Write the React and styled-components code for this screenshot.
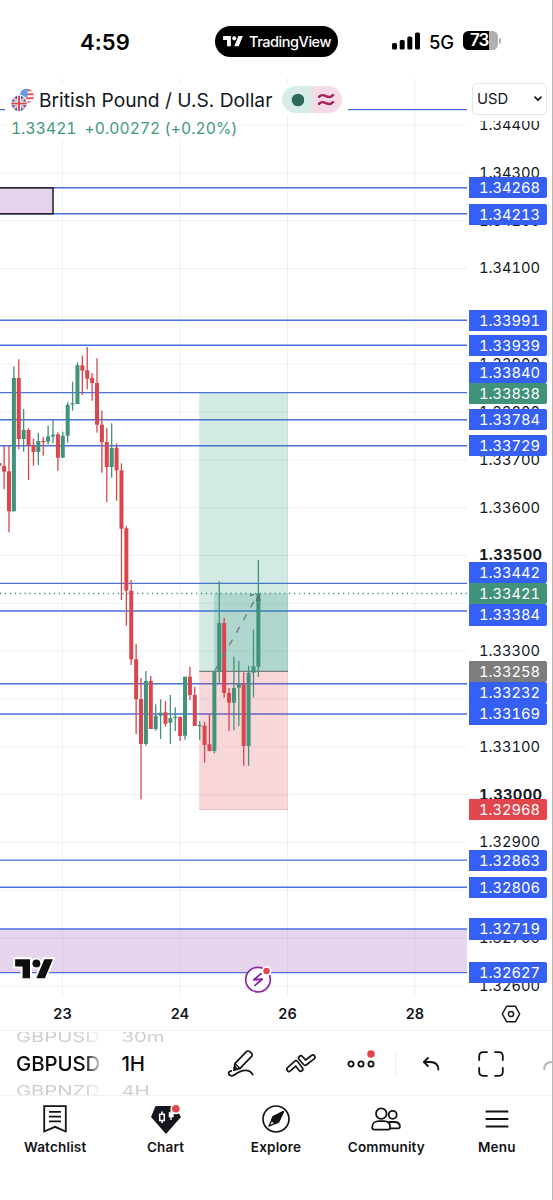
import React from 'react';
import styled, { createGlobalStyle } from 'styled-components';

const GlobalStyle = createGlobalStyle`
  * {
    box-sizing: border-box;
  }
  body {
    margin: 0;
    background: #fff;
    color: #131722;
    font-family: Inter, "Liberation Sans", sans-serif;
  }
  svg {
    display: block;
  }
`

const Screen = styled.div`
  display: flex;
  flex-direction: column;
  width: 553px;
  height: 1200px;
  border-right: 1px solid #b8b8ba;
  background: #fff;
  overflow: hidden;
`

/* ---------- status bar ---------- */

const StatusBar = styled.header`
  display: grid;
  grid-template-columns: 215px 123px 1fr;
  align-items: center;
  height: 78px;
  padding-top: 5px;
  flex: none;
`
const Clock = styled.div`
  padding-left: 80px;
  font-size: 22px;
  font-weight: 600;
  letter-spacing: 0.1px;
  color: #000;
`
const Island = styled.div`
  display: flex;
  align-items: center;
  justify-content: center;
  gap: 5px;
  height: 31px;
  border-radius: 16px;
  background: #000;
  color: #fff;
  font-size: 14.5px;
  font-weight: 500;
  letter-spacing: -0.45px;
`
const StatusRight = styled.div`
  display: flex;
  align-items: center;
  padding-left: 54px;
  color: #000;
`
const Signal = styled.svg`
  margin-bottom: 2px;
`
const Network = styled.span`
  width: 34px;
  margin-left: 9px;
  font-size: 18.5px;
  font-weight: 500;
  letter-spacing: -0.3px;
`
const Battery = styled.div`
  width: 35px;
  height: 19px;
  margin-bottom: 2px;
  padding-left: 7px;
  border-radius: 5.5px;
  background: linear-gradient(90deg, #000 26px, #b0b0b0 26px);
  color: #fff;
  font-size: 17px;
  font-weight: 600;
  line-height: 19px;
  letter-spacing: -0.9px;
`
const BatteryTip = styled.div`
  width: 2px;
  height: 6px;
  margin: 0 0 2px 1px;
  border-radius: 0 2px 2px 0;
  background: #b0b0b0;
`

/* ---------- chart ---------- */

const ChartArea = styled.main`
  display: grid;
  grid-template-columns: 468px 1fr;
  height: 917px;
  flex: none;
`
const Plot = styled.section`
  position: relative;
`
const Legend = styled.div`
  position: absolute;
  top: 6px;
  left: 5px;
`
const LegendTitle = styled.div`
  display: flex;
  align-items: center;
  width: 343px;
  height: 31px;
  padding-left: 6px;
  background: rgba(255, 255, 255, 0.97);
`
const SymbolName = styled.h1`
  width: 243px;
  margin: 0 0 0 4px;
  font-size: 19.2px;
  font-weight: 400;
  letter-spacing: 0;
  white-space: nowrap;
`
const StatusChip = styled.div`
  display: flex;
  width: 60px;
  height: 27px;
  border-radius: 14px;
  overflow: hidden;
`
const ChipHalf = styled.div`
  display: flex;
  align-items: center;
  justify-content: center;
  flex: 1;
  background: ${({ $bg }) => $bg};
`
const LegendPrice = styled.div`
  display: inline-flex;
  gap: 8px;
  height: 26px;
  padding: 1px 4px 0 6px;
  align-items: center;
  background: rgba(255, 255, 255, 0.85);
  color: #3f977d;
  font-size: 15.6px;
  letter-spacing: 0.1px;
  font-variant-numeric: tabular-nums;
  white-space: nowrap;
`

const PriceAxis = styled.aside`
  display: flex;
  flex-direction: column;
  height: 917px;
`
const AxisHead = styled.div`
  height: 43px;
  padding: 5px 0 0 4px;
  flex: none;
`
const CurrencySelect = styled.button`
  display: flex;
  align-items: center;
  justify-content: space-between;
  width: 75px;
  height: 32px;
  padding: 0 4px 0 4px;
  border: 1.5px solid #e4e5e9;
  border-radius: 5px;
  background: #fff;
  color: #131722;
  font-family: inherit;
  font-size: 14.8px;
`
const Scale = styled.div`
  position: relative;
  flex: 1;
  overflow: hidden;
`
const Ticks = styled.div`
  display: flex;
  flex-direction: column;
  margin-top: -19.1px;
`
const Tick = styled.div`
  height: 47.83px;
  padding-left: 11px;
  font-size: 14.7px;
  font-weight: ${({ $major }) => ($major ? 700 : 400)};
  letter-spacing: ${({ $major }) => ($major ? '0.35px' : '0')};
  font-variant-numeric: tabular-nums;
  line-height: 47.83px;
`
const PriceTag = styled.div`
  position: absolute;
  left: 0.5px;
  width: 78px;
  height: 21.3px;
  padding-left: 10.5px;
  border-radius: 0 2px 2px 0;
  background: ${({ $color }) => $color};
  color: #fff;
  font-size: 14.7px;
  font-variant-numeric: tabular-nums;
  line-height: 22.3px;
`

const TimeAxis = styled.div`
  display: grid;
  grid-template-columns: 125px 110px 105px 150px 42px;
  align-items: center;
  justify-items: center;
  height: 35px;
  padding-top: 2px;
  font-size: 14.5px;
  font-weight: 600;
  flex: none;
`

/* ---------- toolbar ---------- */

const Toolbar = styled.div`
  display: flex;
  align-items: center;
  height: 66px;
  padding: 1.5px 0 0 16px;
  border-top: 1.5px solid #f1f1f2;
  border-bottom: 1.5px solid #f1f1f2;
  overflow: hidden;
  flex: none;
`
const Wheel = styled.div`
  display: flex;
  flex-direction: column;
  justify-content: center;
  width: ${({ $width }) => $width}px;
  height: 63px;
  margin-right: ${({ $gap }) => $gap}px;
  overflow: hidden;
  flex: none;
  mask-image: ${({ $fade }) => ($fade ? 'linear-gradient(90deg, #000 68px, transparent 88px)' : 'none')};
`
const WheelItem = styled.div`
  height: 27px;
  line-height: 27px;
  font-size: 20.4px;
  font-weight: ${({ $active }) => ($active ? 500 : 400)};
  letter-spacing: -0.1px;
  color: ${({ $active }) => ($active ? '#0c0c0e' : '#cfcfd0')};
  transform: ${({ $active }) => ($active ? 'none' : 'scaleY(0.72)')};
  white-space: nowrap;
  flex: none;
`
const ToolButton = styled.button`
  display: flex;
  align-items: center;
  justify-content: center;
  width: 60px;
  height: 60px;
  padding: 0;
  border: 0;
  background: none;
  color: #131316;
  flex: none;
`
const Divider = styled.div`
  width: 1px;
  height: 24px;
  margin: 0 5px 0 4px;
  background: #f0f0f1;
  flex: none;
`

/* ---------- tabs ---------- */

const TabBar = styled.nav`
  display: grid;
  grid-template-columns: repeat(5, 1fr);
  height: 104px;
`
const Tab = styled.a`
  display: flex;
  flex-direction: column;
  align-items: center;
  padding-top: 8px;
  font-size: 13.5px;
  font-weight: 600;
  letter-spacing: 0.18px;
  line-height: 18px;
  color: #131316;
`
const TabIcon = styled.div`
  display: flex;
  align-items: center;
  justify-content: center;
  height: 30px;
  margin-bottom: 4px;
`

const BLUE = '#365ff6';
const GREEN = '#40927a';
const RED = '#e0464c';

const TOP = 78;
const yOf = (price) => 125 + (1.344 - price) * 47833;

const ticks = Array.from({ length: 19 }, (_, i) => (1.344 - i * 0.001).toFixed(5));

// label, centre of the tag on the axis, colour
const tags = [
    ['1.34268', 187.8, BLUE],
    ['1.34213', 214.2, BLUE],
    ['1.33991', 320.3, BLUE],
    ['1.33939', 345.4, BLUE],
    ['1.33840', 372.3, BLUE],
    ['1.33838', 393.6, GREEN],
    ['1.33784', 419.8, BLUE],
    ['1.33729', 445.7, BLUE],
    ['1.33442', 572.3, BLUE],
    ['1.33421', 593.6, GREEN],
    ['1.33384', 614.9, BLUE],
    ['1.33258', 671.5, '#7d7d7d'],
    ['1.33232', 692.7, BLUE],
    ['1.33169', 714, BLUE],
    ['1.32968', 809.8, RED],
    ['1.32863', 860.3, BLUE],
    ['1.32806', 887.3, BLUE],
    ['1.32719', 929, BLUE],
    ['1.32627', 972.8, BLUE],
];

const levels = [109.6, 187.7, 213.8, 320.3, 345.3, 392.6, 419.7, 445.8, 583.4, 611, 683.7, 714, 860.1, 887.2, 929, 972.6];
const gridX = [62.5, 180, 287.5, 415];

// [up, high, low, body top, body bottom]
const candles = [
    [0, 463, 466, 463, 466],
    [0, 446, 489.3, 466, 471.7],
    [0, 446, 532.3, 471.3, 511.3],
    [1, 366.3, 511.3, 378, 511.3],
    [0, 359.3, 449.3, 378, 439],
    [1, 409, 451.7, 430, 439],
    [0, 428.3, 480, 430, 445.7],
    [0, 438.7, 465.7, 445.7, 452],
    [1, 432.7, 465, 441, 452],
    [0, 437, 455.7, 441, 442.2],
    [1, 425.7, 444.3, 436.3, 441.7],
    [1, 419.3, 443.3, 434.7, 436.5],
    [0, 432.3, 470.7, 434.3, 457.7],
    [1, 431.7, 457.7, 435.7, 457.7],
    [1, 402.3, 442.7, 404.7, 435.7],
    [1, 381.7, 410.7, 403.2, 404.5],
    [1, 362.3, 404.3, 365.3, 404],
    [0, 355.7, 395, 365.3, 370.7],
    [0, 347, 389.3, 370.3, 378.7],
    [0, 373, 400.7, 378, 383],
    [0, 358.3, 432.7, 383, 424.7],
    [0, 410.7, 472.7, 424.7, 442],
    [0, 427.7, 502.3, 442, 467],
    [1, 423.3, 477.7, 448, 467],
    [0, 443.3, 500.7, 447.7, 470.3],
    [0, 463.3, 600, 470.3, 528.7],
    [0, 526.3, 625.7, 528.3, 590.7],
    [0, 580, 665, 590.7, 659.3],
    [0, 644, 734, 659.3, 699.3],
    [0, 678, 799.3, 699, 744],
    [1, 671, 745.7, 681, 744],
    [0, 676, 729, 681, 729],
    [1, 704.3, 730.7, 715.7, 729],
    [1, 699.3, 739, 712.8, 715.7],
    [0, 701, 726.7, 712.3, 723.7],
    [1, 695, 744, 718, 722.7],
    [1, 707.3, 731, 716.9, 718.1],
    [0, 716.3, 741, 717, 736],
    [1, 676.7, 739.7, 676.7, 735.7],
    [0, 666.7, 700.3, 676.7, 695],
    [0, 686.7, 726, 695, 726],
    [1, 721, 740, 724.9, 726.2],
    [0, 722, 762.7, 725.7, 745],
    [0, 714.3, 751.3, 744.3, 751],
    [1, 671, 753.3, 671, 751],
    [1, 581.3, 683.3, 623, 671],
    [0, 617.7, 697.7, 623, 693],
    [0, 688, 731, 693, 702.7],
    [1, 656.7, 730.3, 688, 702.7],
    [1, 660.7, 726, 684, 687.7],
    [0, 672.3, 765.7, 684, 746],
    [1, 665.7, 765.7, 672.7, 746],
    [1, 629.3, 697.7, 666.3, 672.7],
    [1, 560, 677, 593.3, 666.7],
];

const Candle = ({ x, data }) => {
    const [up, high, low, top, bottom] = data;
    return (
        <g fill={up ? GREEN : '#d9464e'}>
            <rect x={x - 0.65} y={high} width="1.3" height={low - high} />
            <rect x={x - 2} y={top} width="4" height={bottom - top} />
        </g>
    );
};

const TvMark = ({ width, outline }) => (
    <svg width={width} height={width * 22 / 39.5} viewBox="-2 2 39.5 22" fill="currentColor">
        {outline && (
            <g stroke="#fff" strokeWidth="3.6" strokeLinejoin="miter">
                <path d="M14 22H7V11H0V4h14v18zM28 22h-8l7.5-18h8L28 22z" />
                <circle cx="20" cy="8" r="3.6" />
            </g>
        )}
        <path d="M14 22H7V11H0V4h14v18zM28 22h-8l7.5-18h8L28 22z" />
        <circle cx="20" cy="8" r="3.7" />
    </svg>
);

const Watermark = styled.div`
  position: absolute;
  left: 13px;
  top: 879px;
  color: #0f0f0f;
`
const EventBadge = styled.div`
  position: absolute;
  left: 244px;
  top: 887px;
`

const PlotDrawing = () => (
    <svg width="468" height="917" viewBox={`0 ${TOP} 468 917`}>
        <g stroke="#131722" strokeOpacity="0.065">
            {ticks.map((t) => <line key={t} x1="0" x2="467" y1={yOf(t)} y2={yOf(t)} />)}
            {gridX.map((x) => <line key={x} x1={x} x2={x} y1={TOP} y2="995" />)}
        </g>
        <rect x="0" y="929" width="467" height="43.6" fill="#9b4bb5" fillOpacity="0.24" />
        <g stroke="#4a6fe0" strokeWidth="1.4">
            {levels.map((y) => <line key={y} x1="0" x2="467" y1={y} y2={y} />)}
        </g>
        <rect x="-3" y="187.9" width="56" height="25.9" fill="#e6d3eb" stroke="#201a26" strokeWidth="1.5" />

        <rect x="199.2" y="393" width="88.8" height="278.3" fill="#2e9780" fillOpacity="0.21" />
        <rect x="214" y="593.5" width="74" height="77.8" fill="#2e9780" fillOpacity="0.21" />
        <rect x="199.2" y="671.3" width="88.8" height="138.2" fill="#dc4450" fillOpacity="0.21" />
        <path d="M199.2 809.5H288" stroke="#dc9aa4" strokeWidth="0.6" />
        <path d="M199.2 671.3H288" stroke="#76817f" strokeWidth="1.2" />
        <path d="M0 593.5H467" stroke={GREEN} strokeWidth="1.3" strokeDasharray="1.3 3.6" />
        {candles.map((c, i) => <Candle key={i} x={4.1 + 4.89 * (i - 1)} data={c} />)}
        <path d="M215 670.5L256.5 597" stroke="#73837f" strokeWidth="1.5" strokeDasharray="6.5 8" />
        <path d="M250 595.5l4-1.200M256.200 601l2-5 2 5" stroke="#5d716c" strokeWidth="1.4" fill="none" />
    </svg>
);

const Flags = () => (
    <svg width="24" height="24" viewBox="0 0 24 24">
        <defs>
            <clipPath id="us"><circle cx="15.8" cy="8" r="7.2" /></clipPath>
            <clipPath id="uk"><circle cx="8" cy="15.4" r="7.6" /></clipPath>
        </defs>
        <g clipPath="url(#us)">
            <path fill="#fff" d="M8 0h16v16H8z" />
            <path stroke="#e4525a" strokeWidth="2" d="M8 2.2h16M8 6.2h16M8 10.2h16M8 14.2h16" />
            <path fill="#4a90e2" d="M8 0h8.5v9H8z" />
            <path stroke="#d9e8fa" strokeWidth="0.9" strokeDasharray="1 1.6" d="M10 3h6M10 5.5h6M10 8h6" />
        </g>
        <circle cx="8" cy="15.4" r="8.8" fill="#fff" />
        <g clipPath="url(#uk)">
            <path fill="#2f55a8" d="M0 7h16v17H0z" />
            <path stroke="#fff" strokeWidth="2.4" d="M0 7.4l16 16M16 7.4l-16 16" />
            <path stroke="#df4a55" strokeWidth="1" d="M0 7.4l16 16M16 7.4l-16 16" />
            <path stroke="#fff" strokeWidth="3.800" d="M8 7v17M0 15.4h16" />
            <path stroke="#df4a55" strokeWidth="2" d="M8 7v17M0 15.4h16" />
        </g>
    </svg>
);

const EventIcon = () => (
    <svg width="28" height="28" viewBox="0 0 28 28">
        <circle cx="14" cy="14.6" r="12.3" fill="#fff" stroke="#8b2aa6" strokeWidth="1.7" />
        <path d="M17 8.800L9.800 14.800l8.400-.6-7.200 6.200" fill="none" stroke="#8b2aa6" strokeWidth="1.9" strokeLinejoin="round" strokeLinecap="round" />
        <circle cx="22.6" cy="6" r="4.9" fill="#fff" />
        <circle cx="22.6" cy="6" r="3.2" fill={RED} />
    </svg>
);

const line = { fill: 'none', stroke: 'currentColor', strokeLinecap: 'round', strokeLinejoin: 'round' };

const DrawIcon = () => (
    <svg width="28" height="30" viewBox="0 0 28 30" {...line} strokeWidth="1.7">
        <path d="M7 21.2l.9-6.6L19.4 2.7a2.4 2.4 0 0 1 3.4 0l1.6 1.5a2.4 2.4 0 0 1 0 3.4L13 19.4z" />
        <path d="M7.9 14.6l5.1 4.8" strokeWidth="1.4" />
        <path d="M7.2 21l2.6-1.500-2-2z" fill="currentColor" />
        <path d="M4.3 21.9c-1.8.3-2.9 1.5-2.6 2.9.4 2 3.3 2.6 5.5 1.2 3.4-2.2 6.6-4.7 11-4.6 3.5.1 6.3 1.6 7.500 4.3" />
    </svg>
);

const IndicatorIcon = () => (
    <svg width="32" height="24" viewBox="0 0 32 24" {...line}>
        <path d="M4 17.200l7-6.200 4.600 6" strokeWidth="6" />
        <path d="M4 17.200l7-6.200 4.600 6" strokeWidth="2.7" stroke="#fff" />
        <path d="M15.800 6l4.400 5L27.800 5.200" strokeWidth="6" />
        <path d="M15.800 6l4.400 5L27.800 5.200" strokeWidth="2.7" stroke="#fff" />
    </svg>
);

const MoreIcon = () => (
    <svg width="30" height="30" viewBox="0 0 30 30" {...line} strokeWidth="1.8">
        <circle cx="5" cy="15" r="2.6" />
        <circle cx="15" cy="15" r="2.6" />
        <circle cx="25" cy="15" r="2.6" />
        <circle cx="25" cy="5" r="3.8" fill={RED} stroke="none" />
    </svg>
);

const UndoIcon = () => (
    <svg width="18" height="16" viewBox="0 0 18 16" {...line} strokeWidth="1.8">
        <path d="M6 2L1.8 6l4.2 4M2 6h6c5 0 8.3 2.4 8.3 7.5" />
    </svg>
);

const RedoIcon = () => (
    <svg width="18" height="16" viewBox="0 0 18 16" {...line} strokeWidth="1.8" stroke="#b4b4b6">
        <path d="M12 2l4.2 4-4.2 4M16 6h-5.5c-5 0-8.3 2.4-8.3 7.5" />
    </svg>
);

const FullscreenIcon = () => (
    <svg width="28" height="28" viewBox="0 0 28 28" {...line} strokeWidth="1.8">
        <path d="M10 2.2H6A4 4 0 0 0 2.2 6v4M18 2.2h4A4 4 0 0 1 25.8 6v4M10 25.8H6A4 4 0 0 1 2.2 22v-4M18 25.8h4a4 4 0 0 0 3.8-3.8v-4" />
    </svg>
);

const SettingsIcon = () => (
    <svg width="20" height="18" viewBox="0 0 20 18" {...line} strokeWidth="1.5">
        <path d="M5.7 1.2h8.6L18.7 9l-4.4 7.8H5.7L1.3 9z" />
        <circle cx="10" cy="9" r="2.6" />
    </svg>
);

const WatchlistIcon = () => (
    <svg width="24" height="28" viewBox="0 0 24 28" fill="none" stroke="currentColor" strokeWidth="1.8">
        <path d="M1.2 1.2h21.6v25.3L12 21.8 1.2 26.5zM6 6.8h12M6 11.6h12M6 16.4h12" />
    </svg>
);

const ChartIcon = () => (
    <svg width="30" height="29" viewBox="0 0 30 29">
        <path d="M4.6 1h19l6.4 11L15 29 0 12z" fill="#15161f" />
        <path d="M11 6.500v11.500" stroke="#fff" strokeWidth="1.6" />
        <rect x="8.7" y="9.3" width="4.6" height="6.2" fill="#15161f" stroke="#fff" strokeWidth="1.5" />
        <path d="M20 6v9M18.4 8h3.600v3.500h-3.600z" stroke="#fff" strokeWidth="1.4" fill="#fff" />
        <circle cx="24.8" cy="3.8" r="5.5" fill="#fff" />
        <circle cx="24.8" cy="3.8" r="3.8" fill={RED} />
    </svg>
);

const ExploreIcon = () => (
    <svg width="28" height="28" viewBox="0 0 28 28" {...line} strokeWidth="1.7">
        <circle cx="14" cy="14" r="13" />
        <path d="M21.3 6.7L11.3 11.7 6.9 21.2l9.6-4.4z" strokeWidth="1.4" />
        <path d="M21.3 6.7L11.3 11.7l-1.6 3.6 3.7 3.2 3.1-1.7z" fill="currentColor" />
    </svg>
);

const CommunityIcon = () => (
    <svg width="30" height="24" viewBox="0 0 30 24" {...line} strokeWidth="1.8">
        <circle cx="10.3" cy="6.6" r="5.3" />
        <circle cx="21.7" cy="7.8" r="4" />
        <path d="M1.2 20.2c0-4.2 3.2-6 6.6-6h4.800c3.5 0 6.6 1.8 6.6 6 0 1.6-.9 2.4-2.3 2.4H3.5c-1.4 0-2.3-.8-2.3-2.4z" />
        <path d="M18 15h5.2c3.4 0 5.7 1.6 5.7 4.600 0 1.2-.7 1.8-1.9 1.8h-7.6" />
    </svg>
);

const MenuIcon = () => (
    <svg width="24" height="18" viewBox="0 0 24 18" stroke="currentColor" strokeWidth="1.8">
        <path d="M.7 1.5h22.6M.7 9h22.6M.7 16.5h22.6" />
    </svg>
);

const tabs = [
    ['Watchlist', WatchlistIcon],
    ['Chart', ChartIcon],
    ['Explore', ExploreIcon],
    ['Community', CommunityIcon],
    ['Menu', MenuIcon],
];

const Picker = ({ items, ...rest }) => (
    <Wheel {...rest}>
        {items.map((item, i) => <WheelItem key={i} $active={i === 1}>{item}</WheelItem>)}
    </Wheel>
);

const App = () => {
    return (
        <>
            <GlobalStyle />
            <Screen>
                <StatusBar>
                    <Clock>4:59</Clock>
                    <Island>
                        <TvMark width={22} />
                        TradingView
                    </Island>
                    <StatusRight>
                        <Signal width="28" height="18" viewBox="0 0 28 18">
                            <rect x="0" y="11" width="5" height="6.5" rx="1.5" />
                            <rect x="7.7" y="8" width="5" height="9.5" rx="1.5" />
                            <rect x="15.3" y="4.5" width="5" height="13" rx="1.5" />
                            <rect x="23" y="0.5" width="5" height="17" rx="1.5" />
                        </Signal>
                        <Network>5G</Network>
                        <Battery>73</Battery>
                        <BatteryTip />
                    </StatusRight>
                </StatusBar>

                <ChartArea>
                    <Plot>
                        <PlotDrawing />
                        <Legend>
                            <LegendTitle>
                                <Flags />
                                <SymbolName>British Pound / U.S. Dollar</SymbolName>
                                <StatusChip>
                                    <ChipHalf $bg="#d8ece8">
                                        <svg width="14" height="14"><circle cx="8" cy="7" r="6.3" fill="#2c6a5b" /></svg>
                                    </ChipHalf>
                                    <ChipHalf $bg="#f6dbe6">
                                        <svg width="18" height="16" viewBox="1 0 18 16" fill="none" stroke="#a8225a" strokeWidth="2.3">
                                            <path d="M1.500 6c1-3 4-3.5 7.3-1.9C12 5.6 15 5 16.5 2.2M1.500 13c1-3 4-3.5 7.3-1.9C12 12.6 15 12 16.5 9.2" />
                                        </svg>
                                    </ChipHalf>
                                </StatusChip>
                            </LegendTitle>
                            <LegendPrice>
                                <span>1.33421</span>
                                <span>+0.00272 (+0.20%)</span>
                            </LegendPrice>
                        </Legend>
                        <Watermark><TvMark width={42} outline /></Watermark>
                        <EventBadge><EventIcon /></EventBadge>
                    </Plot>
                    <PriceAxis>
                        <AxisHead>
                            <CurrencySelect>
                                USD
                                <svg width="8" height="6" viewBox="0 0 8 6" {...line} strokeWidth="1.7">
                                    <path d="M1 1.2l3 3 3-3" />
                                </svg>
                            </CurrencySelect>
                        </AxisHead>
                        <Scale>
                            <Ticks>
                                {ticks.map((t) => <Tick key={t} $major={t.endsWith('3500') || t.endsWith('3000')}>{t}</Tick>)}
                            </Ticks>
                            {tags.map(([label, y, color]) => (
                                <PriceTag key={label} $color={color} style={{ top: y - 121 - 10.65 }}>{label}</PriceTag>
                            ))}
                        </Scale>
                    </PriceAxis>
                </ChartArea>

                <TimeAxis>
                    <span>23</span>
                    <span>24</span>
                    <span>26</span>
                    <span>28</span>
                    <SettingsIcon />
                </TimeAxis>

                <Toolbar>
                    <Picker items={['GBPUSD', 'GBPUSD', 'GBPNZD']} $width={86} $gap={19.5} $fade />
                    <Picker items={['30m', '1H', '4H']} $width={60} $gap={29.5} />
                    <ToolButton><DrawIcon /></ToolButton>
                    <ToolButton><IndicatorIcon /></ToolButton>
                    <ToolButton><MoreIcon /></ToolButton>
                    <Divider />
                    <ToolButton><UndoIcon /></ToolButton>
                    <ToolButton><FullscreenIcon /></ToolButton>
                    <ToolButton><RedoIcon /></ToolButton>
                </Toolbar>

                <TabBar>
                    {tabs.map(([label, Icon]) => (
                        <Tab key={label}>
                            <TabIcon><Icon /></TabIcon>
                            {label}
                        </Tab>
                    ))}
                </TabBar>
            </Screen>
        </>
    );
};

export default App;
